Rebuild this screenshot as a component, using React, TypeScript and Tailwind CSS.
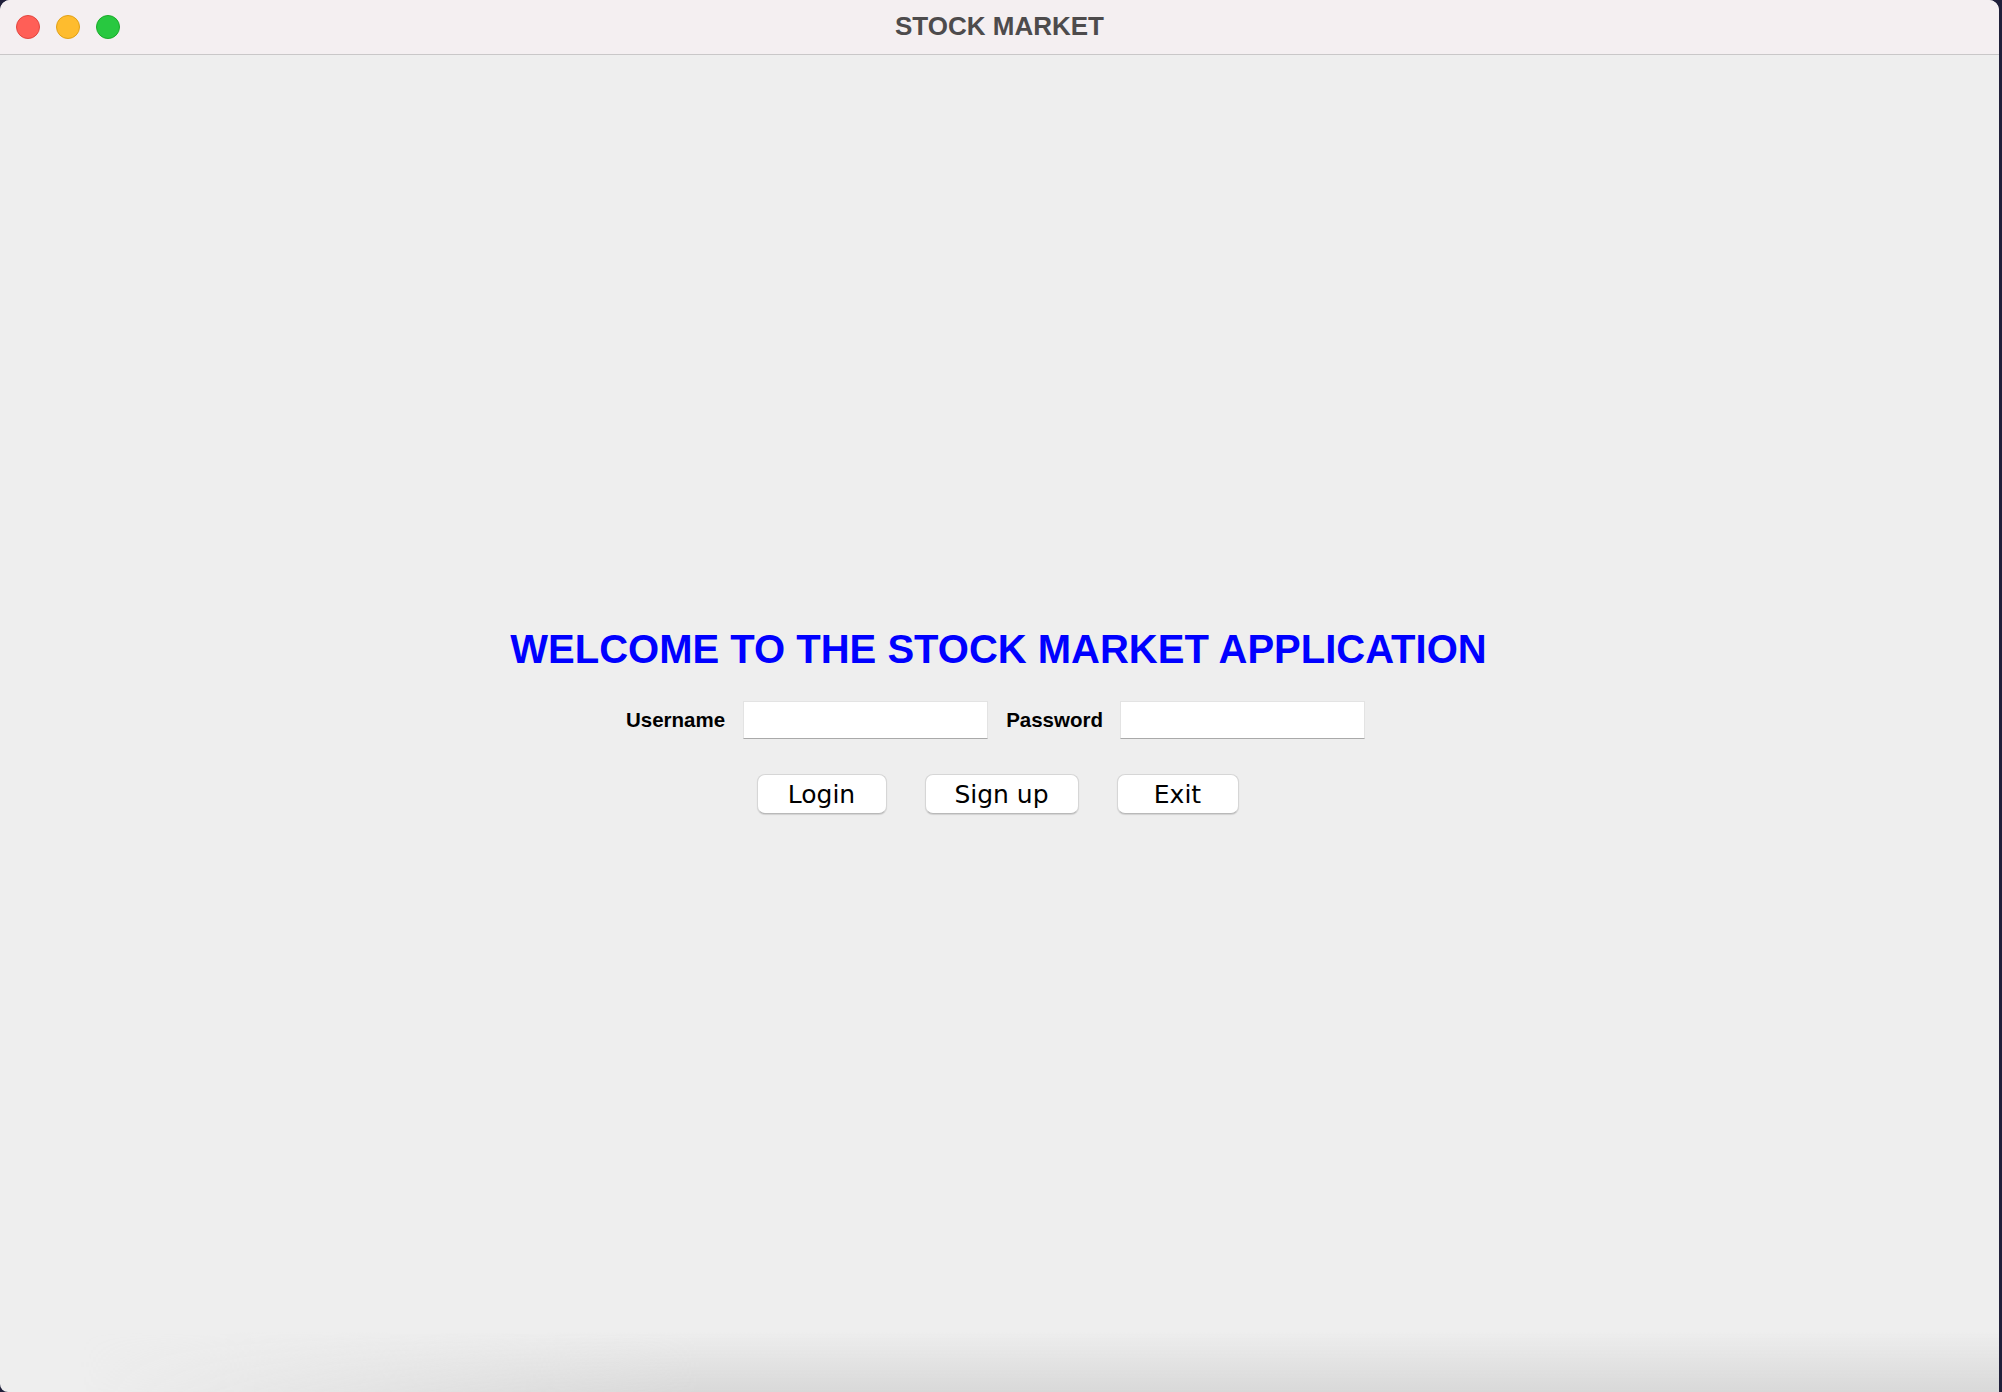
import * as React from "react"

const buttons = [
  { label: "Login", width: "w-[130px]" },
  { label: "Sign up", width: "w-[154px]" },
  { label: "Exit", width: "w-[122px]" },
]

function TrafficLights() {
  return (
    <div className="flex items-center gap-[16px] pl-[16px]">
      <span className="h-[24px] w-[24px] rounded-full bg-[#ff5f57] border border-[#e2463f]" />
      <span className="h-[24px] w-[24px] rounded-full bg-[#febc2e] border border-[#e1a116]" />
      <span className="h-[24px] w-[24px] rounded-full bg-[#28c840] border border-[#1aab29]" />
    </div>
  )
}

export default function App() {
  return (
    <div className="h-[1392px] w-full overflow-hidden bg-[#1f1f3a] font-['Liberation_Sans',Arial,sans-serif]">
      <div className="relative flex h-[1392px] w-[1999px] flex-col overflow-hidden rounded-t-[10px] rounded-bl-[8px] bg-[#eeeeee]">
        {/* title bar */}
        <div className="relative flex h-[55px] shrink-0 items-center border-b border-[#c9c7c8] bg-[#f4eff1]">
          <TrafficLights />
          <div className="absolute inset-0 flex items-center justify-center pb-[2px] text-[26px] font-bold text-[#4d4b4c]">
            STOCK MARKET
          </div>
        </div>

        {/* content */}
        <div className="flex flex-1 flex-col items-center justify-center pb-[4px] pr-[2px]">
          <h1 className="text-[40px] font-bold leading-none text-[#0000ff]">
            WELCOME TO THE STOCK MARKET APPLICATION
          </h1>

          <div className="mt-[32px] flex items-center pr-[6px]">
            <label className="text-[20.5px] font-bold text-black">Username</label>
            <input
              type="text"
              className="ml-[18px] h-[38px] w-[245px] border border-[#e3e3e3] border-b-[#a9a9a9] bg-white outline-none"
            />
            <label className="ml-[18px] text-[20.5px] font-bold text-black">Password</label>
            <input
              type="password"
              className="ml-[17px] h-[38px] w-[245px] border border-[#e3e3e3] border-b-[#a9a9a9] bg-white outline-none"
            />
          </div>

          <div className="mt-[35px] flex items-center gap-[38px] pr-[2px]">
            {buttons.map((b) => (
              <button
                key={b.label}
                className={`${b.width} h-[40px] rounded-[8px] border border-[#d6d6d6] border-b-[#b9b9b9] bg-white font-['DejaVu_Sans',sans-serif] text-[25px] leading-none text-black shadow-[0_1px_1px_rgba(0,0,0,0.12)]`}
              >
                {b.label}
              </button>
            ))}
          </div>
        </div>

        {/* dock shadow at the bottom */}
        <div className="pointer-events-none absolute bottom-0 left-0 right-0 h-[60px] bg-gradient-to-b from-transparent to-[#d8d8d8] [mask-image:linear-gradient(to_right,transparent_80px,black_700px)]" />
      </div>
    </div>
  )
}
